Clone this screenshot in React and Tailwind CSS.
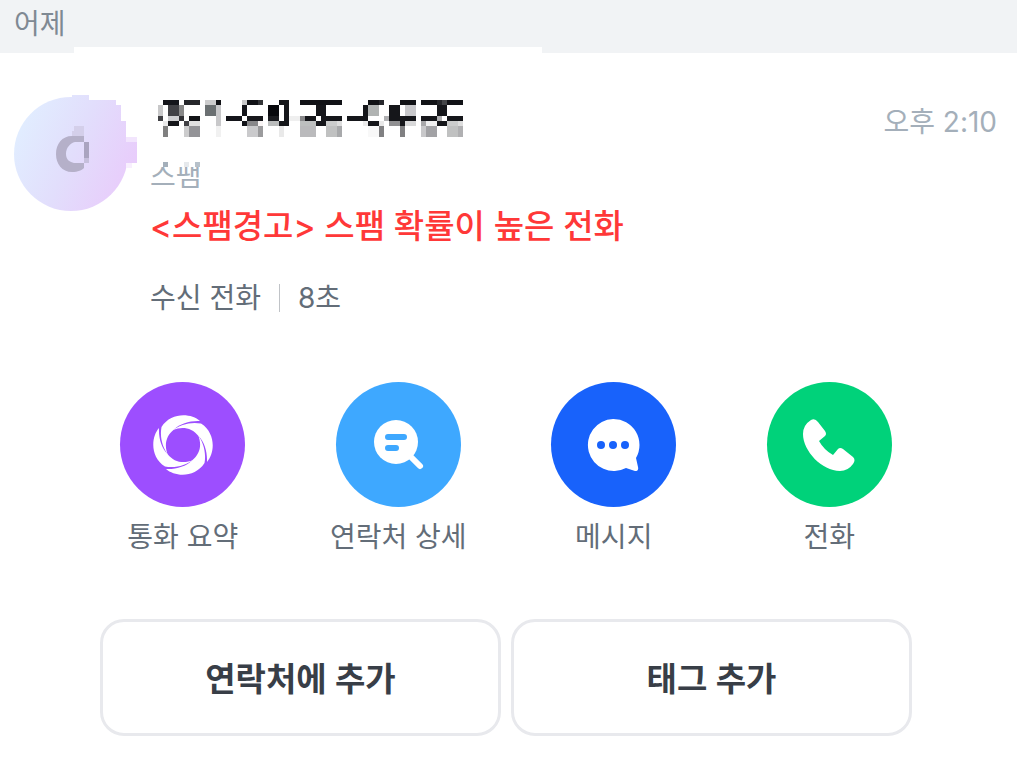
import React from "react";

const FONT = "font-['Inter','Noto_Sans_CJK_KR',sans-serif]";

// x, y, width, height, colour of every block of the masked number
const MASK_BLOCKS = [
  [5, 0, 16, 5, "#14151a"], [26, 0, 16, 5, "#26272b"], [47, 0, 11, 5, "#cccccd"], [58, 0, 5, 5, "#111216"],
  [0, 5, 5, 11, "#c8c8c9"], [10, 5, 11, 11, "#414145"], [21, 5, 5, 11, "#888888"],
  [47, 5, 11, 11, "#6b7072"], [58, 5, 5, 21, "#c8c8ca"], [58, 26, 5, 11, "#f1f1f1"],
  [0, 16, 5, 5, "#414145"], [10, 16, 11, 5, "#cfcfd1"], [21, 16, 5, 5, "#303034"], [31, 16, 11, 5, "#111216"],
  [5, 21, 5, 5, "#e9e9e9"], [10, 21, 11, 5, "#15161a"], [26, 21, 5, 5, "#414145"], [31, 21, 11, 5, "#e0e0e0"],
  [5, 26, 5, 11, "#808080"], [26, 26, 5, 11, "#cccccd"], [31, 26, 11, 11, "#939397"],
  [68, 16, 16, 5, "#14151a"],
  [84, 0, 5, 5, "#c8c8c9"], [89, 0, 11, 5, "#111216"], [100, 0, 5, 5, "#333437"],
  [84, 5, 5, 11, "#14151a"], [89, 16, 16, 5, "#17181c"],
  [84, 21, 5, 5, "#14151a"], [89, 21, 11, 5, "#88888a"], [100, 21, 5, 5, "#f8f4f4"],
  [89, 26, 11, 11, "#cacacc"], [100, 26, 5, 11, "#9b9b9d"],
  [121, 0, 10, 5, "#15161a"], [110, 5, 11, 11, "#08090d"], [126, 5, 5, 16, "#15161a"],
  [110, 16, 11, 5, "#1b1c20"], [110, 21, 11, 5, "#babcbc"], [121, 21, 10, 5, "#15161a"], [121, 26, 5, 11, "#e9e9e9"],
  [131, 16, 11, 5, "#efefef"],
  [142, 0, 42, 5, "#111216"], [158, 5, 10, 11, "#15161a"],
  [142, 16, 5, 5, "#88888a"], [147, 16, 11, 5, "#15161a"], [163, 16, 21, 5, "#15161a"],
  [142, 21, 16, 5, "#bdbfbf"], [158, 21, 10, 5, "#15161a"], [168, 21, 11, 5, "#cbcccc"], [179, 21, 5, 5, "#dddddd"],
  [142, 26, 16, 11, "#bababc"], [168, 26, 11, 11, "#c0c1c1"], [179, 26, 5, 11, "#a8a9ab"],
  [189, 16, 21, 5, "#15161a"], [205, 5, 5, 11, "#15161a"],
  [210, 0, 11, 5, "#111216"], [221, 0, 5, 5, "#26272b"], [210, 5, 11, 11, "#b0b3b2"],
  [205, 21, 5, 5, "#ececec"], [210, 21, 11, 5, "#15161a"], [221, 21, 5, 5, "#e8e8e8"],
  [210, 26, 11, 11, "#f8f8f8"], [221, 26, 5, 11, "#808082"],
  [242, 0, 16, 5, "#111216"], [231, 5, 11, 11, "#15161a"], [247, 5, 11, 11, "#c8c8cb"],
  [226, 16, 5, 5, "#b0b0b2"], [231, 16, 27, 5, "#15161a"],
  [231, 21, 11, 5, "#909092"], [242, 21, 5, 5, "#15161a"], [247, 21, 11, 5, "#d8d8d9"], [242, 26, 5, 11, "#808082"],
  [263, 0, 16, 5, "#111216"], [279, 0, 5, 5, "#26272b"], [284, 0, 5, 5, "#444548"], [289, 0, 16, 5, "#111216"],
  [279, 5, 10, 11, "#15161a"],
  [263, 16, 16, 5, "#15161a"], [279, 16, 5, 5, "#b0b0b2"], [289, 16, 16, 5, "#15161a"],
  [263, 21, 5, 5, "#a8a8aa"], [268, 21, 11, 5, "#efefef"], [279, 21, 10, 5, "#15161a"], [289, 21, 11, 5, "#cbcccc"], [300, 21, 5, 5, "#dddddd"],
  [263, 26, 5, 11, "#c8c8ca"], [268, 26, 11, 11, "#a2a2a5"], [289, 26, 11, 11, "#c0c1c1"], [300, 26, 5, 11, "#b0b0b2"],
];

const Avatar = () => (
  <svg width="124" height="118" viewBox="0 0 124 118" className="shrink-0" aria-hidden="true">
    <defs>
      <linearGradient id="avatar" gradientUnits="userSpaceOnUse" x1="4" y1="36" x2="112" y2="84">
        <stop offset="0" stopColor="#e1edff" />
        <stop offset="0.5" stopColor="#e2defc" />
        <stop offset="1" stopColor="#e8cdfb" />
      </linearGradient>
    </defs>
    <circle cx="57" cy="60" r="57" fill="url(#avatar)" />
    <path d="M58 1H75V6H102V11H107V27H112V43H123V69H112V60H58Z" fill="url(#avatar)" />
    <path d="M112 43H123V48H112Z" fill="#f2e5fd" />
    <path d="M112 69H118V74H112Z" fill="#f8effe" />
    <path d="M70 42H58C48 42 42 50 42 60S48 78 58 78C64 78 68 76 70 74V69H60C56 68 52 66 52 60S56 49 61 48H70Z" fill="#b5b0c9" />
    <path d="M60 32H70V42H58V37H60Z" fill="#d4cfea" />
    <path d="M70 48H75V64H70Z" fill="#aaa4c0" />
    <path d="M70 64H75V69H70Z" fill="#c6bfdc" />
  </svg>
);

const MaskedNumber = () => (
  <svg width="305" height="37" viewBox="0 0 305 37" shapeRendering="crispEdges" className="ml-2" aria-hidden="true">
    {MASK_BLOCKS.map(([x, y, w, h, fill]) => (
      <rect key={`${x}-${y}`} x={x} y={y} width={w} height={h} fill={fill} />
    ))}
  </svg>
);

// lower rim of the mask, it covers the tops of the label's letters
const MaskEdge = () => (
  <svg width="56" height="9" viewBox="0 0 56 9" shapeRendering="crispEdges" className="absolute left-0 top-0" aria-hidden="true">
    <rect width="56" height="9" fill="white" />
    <rect x="13" y="4" width="5" height="5" fill="#a4afba" />
    <rect x="34" y="4" width="5" height="5" fill="#e6e9ec" />
    <rect x="45" y="4" width="5" height="5" fill="#b7c1ca" />
  </svg>
);

const SummaryIcon = () => (
  <svg width="62" height="62" viewBox="-31 -31 62 62" aria-hidden="true">
    {[0, 90, 180, 270].map((angle) => (
      <path
        key={angle}
        transform={`rotate(${angle})`}
        d="M17 -24C8 -32 -12 -33 -21.5 -18C-23.5 -7 -20 3 -15 10C-19 1 -17.5 -9 -9 -15.5C-3 -21.5 7 -24.5 17 -24Z"
        fill="white"
      />
    ))}
  </svg>
);

const DetailIcon = () => (
  <svg width="62" height="62" viewBox="0 0 62 62" aria-hidden="true">
    <path d="M40 39L53 52" stroke="white" strokeWidth="6" strokeLinecap="round" />
    <circle cx="29" cy="28" r="22" fill="white" />
    <path d="M21 23H37M21 34H29" stroke="#3ea8ff" strokeWidth="6" strokeLinecap="round" />
  </svg>
);

const MessageIcon = () => (
  <svg width="62" height="62" viewBox="0 0 62 62" aria-hidden="true">
    <path
      d="M30 5A26 26 0 1 0 43 54L52 57Q56 57 55 53L53 44A26 26 0 0 0 30 5Z"
      fill="white"
    />
    <circle cx="18" cy="31" r="4" fill="#1862fb" />
    <circle cx="30" cy="31" r="4" fill="#1862fb" />
    <circle cx="42" cy="31" r="4" fill="#1862fb" />
  </svg>
);

const CallIcon = () => (
  <svg width="62" height="62" viewBox="0 0 62 62" aria-hidden="true">
    <path
      d="M13 6Q17 4 20 8L27 17Q29 20 27 22L21 27Q26 36 35 41L40 35Q42 33 45 35L55 43Q58 46 55 50Q50 57 42 57C24 57 5 37 5 20Q5 11 13 6Z"
      fill="white"
    />
  </svg>
);

const ACTIONS = [
  { label: "통화 요약", color: "bg-[#9d4eff]", Icon: SummaryIcon },
  { label: "연락처 상세", color: "bg-[#3ea8ff]", Icon: DetailIcon },
  { label: "메시지", color: "bg-[#1862fb]", Icon: MessageIcon },
  { label: "전화", color: "bg-[#00d27a]", Icon: CallIcon },
];

const App = () => {
  return (
    <main className={`min-h-screen bg-white text-[#636d78] ${FONT}`}>
      <header className="bg-[#f1f3f5]">
        <h2 className="h-[47px] px-[14px] text-[28px] leading-[48px] text-[#7f8993]">어제</h2>
        <div className="flex h-[6px]">
          <div className="w-[74px]" />
          <div className="w-[468px] bg-white" />
        </div>
      </header>

      <section className="flex items-start pl-[14px] pr-5 pt-[41px]">
        <Avatar />
        <div className="ml-3 flex-1">
          <div className="h-16 pt-[6px]">
            <MaskedNumber />
          </div>
          <p className="relative text-[28px] leading-[36px] text-[#a4afba]">
            스팸
            <MaskEdge />
          </p>
          <p className="mt-3 text-[33px] font-medium leading-[40px] text-[#ff3838]">
            &lt;스팸경고&gt; 스팸 확률이 높은 전화
          </p>
          <div className="mt-8 flex items-center text-[28px] leading-[40px]">
            <span>수신 전화</span>
            <span className="mx-[18px] h-7 w-px bg-[#c0c3c7]" />
            <span>8초</span>
          </div>
        </div>
        <time className="pt-2 text-[28px] leading-[40px] text-[#a4afba]">오후 2:10</time>
      </section>

      <nav className="mt-16 grid grid-cols-4 pl-[75px] pr-[80px]">
        {ACTIONS.map(({ label, color, Icon }) => (
          <button key={label} type="button" className="flex flex-col items-center">
            <span className={`flex size-[125px] items-center justify-center rounded-full ${color}`}>
              <Icon />
            </span>
            <span className="mt-[10px] text-[28px] leading-[40px]">{label}</span>
          </button>
        ))}
      </nav>

      <div className="mt-[62px] grid grid-cols-2 gap-[10px] pl-[100px] pr-[105px] text-[33px] font-semibold text-[#383e47]">
        <button type="button" className="h-[117px] rounded-3xl border-3 border-[#e8e9ed] pt-1">
          연락처에 추가
        </button>
        <button type="button" className="h-[117px] rounded-3xl border-3 border-[#e8e9ed] pt-1">
          태그 추가
        </button>
      </div>
    </main>
  );
};

export default App;
